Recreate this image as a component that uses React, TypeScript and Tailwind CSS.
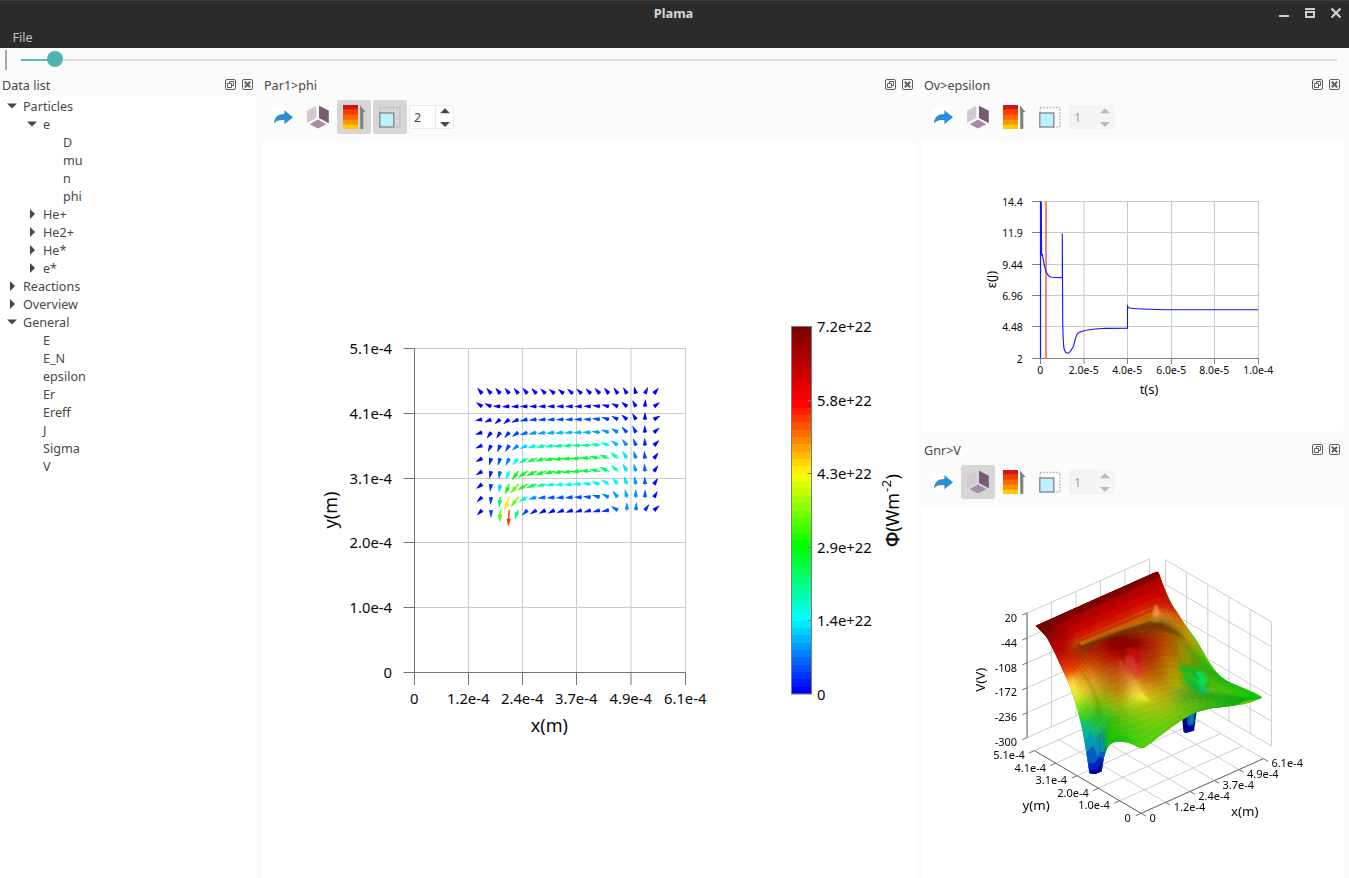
import React from "react";

type Pt = [number, number];
const INK = "#080808";
const FONT = "'Noto Sans', 'Open Sans', sans-serif";

const JET: [number, number[]][] = [
  [0, [0, 0, 255]],
  [0.2, [0, 255, 255]],
  [0.4, [0, 255, 0]],
  [0.6, [255, 255, 0]],
  [0.8, [255, 0, 0]],
  [1, [128, 0, 0]],
];

function jet(t: number) {
  for (let i = 1; i < JET.length; i++) {
    const [b, cb] = JET[i];
    const [a, ca] = JET[i - 1];
    if (t <= b) {
      const k = (t - a) / (b - a);
      return `rgb(${ca.map((c, j) => Math.round(c + (cb[j] - c) * k)).join(",")})`;
    }
  }
  return "rgb(128,0,0)";
}

/* ---------- icons ---------- */

function FloatIcon() {
  return (
    <svg width="11" height="11" viewBox="0 0 11 11" fill="none" stroke="#5e5e5e">
      <rect x="0.5" y="0.5" width="10" height="10" rx="1.5" />
      <path d="M4.5 4V2.5h4v4H7M2.5 4.5h4v4h-4z" />
    </svg>
  );
}

function CloseIcon() {
  return (
    <svg width="11" height="11" viewBox="0 0 11 11" fill="none" stroke="#5e5e5e">
      <rect x="0.5" y="0.5" width="10" height="10" rx="1.5" />
      <path d="M2.800 2.800l5.400 5.400M8.200 2.800l-5.400 5.400" strokeWidth="2" />
    </svg>
  );
}

function ShareIcon() {
  return (
    <svg width="24" height="24" viewBox="0 0 24 24">
      <rect x="2" y="3" width="17" height="17" fill="#fff" />
      <path d="M4 18.400C4.300 12.200 8 8.900 14.400 8.900V5.200L23 12.200l-8.600 7v-4C10 14.800 6.600 15.600 4 18.400z" fill="#2a8dd6" />
    </svg>
  );
}

function CubeIcon() {
  return (
    <svg width="24" height="24" viewBox="0 0 24 24">
      <path d="M1 5.800L10.300 0.800V13L1 18.200z" fill="#d5c8d5" />
      <path d="M13 0.800L22.800 5.800V18.200L13 13z" fill="#765b74" />
      <path d="M12 14.600L20.300 19.200L12 23.600L3.700 19.200z" fill="#a88ba6" />
    </svg>
  );
}

function ScaleIcon() {
  return (
    <svg width="24" height="24" viewBox="0 0 24 24">
      <rect x="1" y="0" width="15" height="24" fill="#ffcc00" />
      <rect x="1" y="0" width="15" height="19" fill="#ff9300" />
      <rect x="1" y="0" width="15" height="14" fill="#ff6600" />
      <rect x="1" y="0" width="15" height="9.300" fill="#f53d00" />
      <rect x="1" y="0" width="15" height="4.300" fill="#d4151a" />
      <path d="M1 4.500h15M1 9.500h15M1 14.500h15M1 19.300h15" stroke="#d93a10" strokeWidth="0.500" opacity="0.600" />
      <path d="M18 0.500L23.500 7H21.300V24H18.300z" fill="#808080" />
    </svg>
  );
}

function FrameIcon() {
  return (
    <svg width="24" height="24" viewBox="0 0 24 24" fill="none">
      <path d="M2 2.500H22M21.800 4V22.500" stroke="#b4b4b4" strokeWidth="1.500" strokeDasharray="1.600 1.600" />
      <path d="M2.200 3v5M15 22.200h7" stroke="#b4b4b4" strokeWidth="1.300" strokeDasharray="1.600 1.600" />
      <rect x="1.800" y="8" width="14" height="14" fill="#baf2ff" stroke="#8a8a8a" strokeWidth="1.400" />
    </svg>
  );
}

/* ---------- widgets ---------- */

function DockTitle({ title }: { title: string }) {
  return (
    <div className="flex h-[20px] shrink-0 items-start pr-[3px] pl-[2px]">
      <span className="flex-1 pt-[2px]">{title}</span>
      <div className="flex gap-[6px] pt-[4px]">
        <FloatIcon />
        <CloseIcon />
      </div>
    </div>
  );
}

function ToolButton({ on, children }: { on?: boolean; children: React.ReactNode }) {
  return (
    <button
      className={
        "flex h-[34px] w-[34px] items-center justify-center rounded-[2px] " + (on ? "bg-[#d6d6d6]" : "")
      }
    >
      {children}
    </button>
  );
}

function Spin({ value, disabled }: { value: number; disabled?: boolean }) {
  const c = disabled ? "#b9b9b9" : "#474747";
  return (
    <div
      className={
        "flex h-[24px] w-[45px] overflow-hidden rounded-[2px] border " +
        (disabled ? "border-[#f2f2f2] bg-[#f3f3f3] text-[#a3a3a3]" : "border-[#e9e9e9] bg-white text-[#474747]")
      }
    >
      <div className="flex flex-1 items-center pt-[2px] pl-1">{value}</div>
      <div
        className={
          "flex w-[18px] items-center justify-center border-l " +
          (disabled ? "border-[#f3f3f3] bg-[#f5f5f5]" : "border-[#e9e9e9]")
        }
      >
        <svg width="10" height="20" viewBox="0 0 10 20" fill={c}>
          <path d="M0 6.300L5 1.300L10 6.300z" />
          <path d="M0 15.100h10L5 20z" />
        </svg>
      </div>
    </div>
  );
}

function Toolbar({ on, value, disabled }: { on: string[]; value: number; disabled?: boolean }) {
  return (
    <div className="flex h-[47px] shrink-0 items-center gap-[2px] pb-[3px] pl-[3px]">
      <ToolButton><ShareIcon /></ToolButton>
      <ToolButton on={on.includes("cube")}><CubeIcon /></ToolButton>
      <ToolButton on={on.includes("scale")}><ScaleIcon /></ToolButton>
      <ToolButton on={on.includes("frame")}><FrameIcon /></ToolButton>
      <Spin value={value} disabled={disabled} />
    </div>
  );
}

/* ---------- tree ---------- */

type Node = { label: string; depth: number; state?: "open" | "closed" };
const TREE: Node[] = [
  { label: "Particles", depth: 0, state: "open" },
  { label: "e", depth: 1, state: "open" },
  { label: "D", depth: 2 },
  { label: "mu", depth: 2 },
  { label: "n", depth: 2 },
  { label: "phi", depth: 2 },
  { label: "He+", depth: 1, state: "closed" },
  { label: "He2+", depth: 1, state: "closed" },
  { label: "He*", depth: 1, state: "closed" },
  { label: "e*", depth: 1, state: "closed" },
  { label: "Reactions", depth: 0, state: "closed" },
  { label: "Overview", depth: 0, state: "closed" },
  { label: "General", depth: 0, state: "open" },
  ...["E", "E_N", "epsilon", "Er", "Ereff", "J", "Sigma", "V"].map((label) => ({ label, depth: 1 })),
];

const INDENT = ["pl-[7px]", "pl-[27px]", "pl-[47px]"];

function Tree() {
  return (
    <div className="mt-[2px] flex-1 bg-white">
      {TREE.map((n, i) => (
        <div key={i} className={"flex h-[18px] items-center " + INDENT[n.depth]}>
          <svg width="10" height="10" viewBox="0 0 10 10" fill="#474747">
            {n.state === "open" && <path d="M0 2.500h10L5 7.500z" />}
            {n.state === "closed" && <path d="M3 0L8 5L3 10z" />}
          </svg>
          <span className="pt-[2px] pl-[6px]">{n.label}</span>
        </div>
      ))}
    </div>
  );
}

/* ---------- vector field ---------- */

const ANGLES = [
  [130, 130, 130, 128, 128, 130, 133, 135, 140, 140, 138, 138, 135, 133, 130, 126, 122, 105, 65, 50],
  [145, 155, 178, 182, 183, 180, 180, 180, 180, 180, 180, 180, 178, 172, 165, 155, 140, 120, 86, 35],
  [190, 205, 220, 218, 205, 192, 187, 185, 184, 183, 183, 180, 178, 172, 162, 152, 138, 120, 90, 30],
  [198, 235, 240, 230, 215, 200, 193, 190, 187, 186, 184, 182, 178, 172, 160, 148, 132, 118, 92, 40],
  [205, 245, 248, 238, 218, 205, 197, 193, 190, 187, 184, 180, 178, 172, 160, 145, 128, 112, 93, 45],
  [210, 255, 252, 245, 230, 212, 203, 196, 192, 188, 184, 181, 177, 170, 158, 140, 122, 108, 95, 52],
  [212, 258, 260, 248, 235, 215, 205, 200, 195, 190, 186, 182, 176, 168, 155, 138, 118, 105, 95, 55],
  [218, 262, 262, 248, 230, 212, 200, 193, 188, 185, 182, 178, 172, 162, 148, 130, 110, 103, 92, 57],
  [222, 266, 265, 250, 232, 210, 195, 188, 186, 185, 183, 180, 174, 165, 152, 130, 104, 92, 88, 60],
  [225, 270, 268, 267, 248, 225, 212, 208, 205, 202, 200, 198, 196, 194, 190, 150, 90, 85, 55, 40],
];

const MAGS = [
  [0, 0, 0, 0, 0, 0, 0, 0, 0, 0, 0, 0, 0, 0, 0, 0, 0, 0, 0, 0],
  [0, 0, 0, 0, 0, 0.01, 0.01, 0.01, 0.01, 0.01, 0.01, 0.01, 0.01, 0.01, 0, 0, 0, 0, 0, 0],
  [0, 0, 0, 0.01, 0.03, 0.04, 0.05, 0.06, 0.06, 0.07, 0.07, 0.07, 0.07, 0.06, 0.04, 0.03, 0.01, 0, 0, 0],
  [0, 0.01, 0.02, 0.03, 0.05, 0.08, 0.12, 0.13, 0.14, 0.15, 0.15, 0.15, 0.14, 0.13, 0.12, 0.1, 0.06, 0.03, 0.02, 0],
  [0, 0.02, 0.03, 0.05, 0.11, 0.17, 0.23, 0.26, 0.27, 0.28, 0.28, 0.28, 0.27, 0.25, 0.2, 0.15, 0.11, 0.06, 0.03, 0],
  [0, 0.03, 0.06, 0.1, 0.2, 0.28, 0.33, 0.35, 0.36, 0.37, 0.37, 0.37, 0.36, 0.34, 0.31, 0.26, 0.18, 0.1, 0.05, 0],
  [0, 0.03, 0.09, 0.22, 0.37, 0.4, 0.38, 0.38, 0.37, 0.36, 0.36, 0.36, 0.35, 0.33, 0.3, 0.26, 0.18, 0.12, 0.08, 0.01],
  [0, 0.04, 0.17, 0.4, 0.47, 0.41, 0.34, 0.27, 0.23, 0.2, 0.2, 0.2, 0.19, 0.19, 0.2, 0.2, 0.18, 0.12, 0.07, 0.01],
  [0, 0.05, 0.33, 0.62, 0.48, 0.25, 0.12, 0.08, 0.07, 0.07, 0.07, 0.06, 0.07, 0.08, 0.1, 0.12, 0.13, 0.11, 0.07, 0.01],
  [0, 0.06, 0.46, 0.76, 0.3, 0.05, 0.02, 0.01, 0.01, 0.01, 0.01, 0.01, 0.02, 0.03, 0.04, 0.08, 0.12, 0.1, 0.04, 0.01],
];

function Arrows() {
  const out: React.ReactNode[] = [];
  ANGLES.forEach((row, r) =>
    row.forEach((a, c) => {
      const t = MAGS[r][c];
      const len = (20.5 + t * 23 + t * t * 16) / 3;
      const head = Math.min(len, 7.2);
      const shaft = len - head;
      out.push(
        <path
          key={r * 20 + c}
          transform={`translate(${(482 + c * 9.053).toFixed(2)},${(393.5 + r * 12.97).toFixed(2)}) rotate(${-a})`}
          d={`M-0.300 -0.700H${shaft}V-2.150L${len} -0.250V0.250L${shaft} 2.150V0.700H-0.300z`}
          fill={jet(t)}
        />,
      );
    }),
  );
  return <g>{out}</g>;
}

const MX = [414.5, 468.5, 522.5, 576.5, 631, 685.5];
const MY = [348.5, 413.5, 478.5, 542.5, 607.5, 672.5];
const MXL = ["0", "1.2e-4", "2.4e-4", "3.7e-4", "4.9e-4", "6.1e-4"];
const MYL = ["5.1e-4", "4.1e-4", "3.1e-4", "2.0e-4", "1.0e-4", "0"];
const BARS = Array.from({ length: 50 }, (_, i) => i);
const BAR_LABELS: [string, number][] = [
  ["7.2e+22", 332],
  ["5.8e+22", 405.500],
  ["4.3e+22", 479],
  ["2.9e+22", 552.500],
  ["1.4e+22", 626],
  ["0", 699.500],
];

function FieldPlot() {
  return (
    <svg className="min-h-0 flex-1 bg-white" width="654" viewBox="262 142 654 736" preserveAspectRatio="xMinYMin slice" fontFamily={FONT} fontSize="14.800" fill={INK}>
      <g stroke="#cbcbcb" strokeWidth="1">
        {MX.map((x) => <path key={x} d={`M${x} 348.500V672`} />)}
        {MY.map((y) => <path key={y} d={`M414 ${y}H686`} />)}
      </g>
      <g stroke="#737373" strokeWidth="1">
        <path d="M414.500 348.500V672.500H685.500" fill="none" />
        {MX.map((x) => <path key={x} d={`M${x} 672.500V685`} />)}
        {MY.map((y) => <path key={y} d={`M403.500 ${y}H414.500`} />)}
      </g>
      {MXL.map((t, i) => (
        <text key={t} x={MX[i] - 0.300} y="703.800" textAnchor="middle">{t}</text>
      ))}
      {MYL.map((t, i) => (
        <text key={t} x="392" y={MY[i] + 5.300} textAnchor="end" textLength={t === "0" ? undefined : 42.5}>{t}</text>
      ))}
      <text x="549.300" y="732" textAnchor="middle" fontSize="18">x(m)</text>
      <text transform="translate(337,510) rotate(-90)" textAnchor="middle" fontSize="18">y(m)</text>
      <Arrows />
      <g shapeRendering="crispEdges">
        {BARS.map((i) => (
          <rect key={i} x="792" y={327 + i * 7.34} width="19" height="7.800" fill={jet(1 - i / 49)} />
        ))}
      </g>
      <rect x="791.500" y="326.500" width="20" height="367.500" fill="none" stroke="#7c7c7c" />
      <path d="M807.500 400.500h4M807.500 473.500h4M807.500 547.500h4M807.500 620.500h4" stroke="#777" />
      {BAR_LABELS.map(([t, y]) => (
        <text key={t} x="817" y={y}>{t}</text>
      ))}
      <text transform="translate(899,547) rotate(-90)" fontSize="18">
        <tspan stroke={INK} strokeWidth="0.500">Φ</tspan>(Wm<tspan dx="1" dy="-8" fontSize="13">-</tspan><tspan dx="0.500" fontSize="13">2</tspan>
        <tspan dx="0.500" dy="8">)</tspan>
      </text>
    </svg>
  );
}

/* ---------- time trace ---------- */

const EX = [1040.500, 1084, 1127.500, 1171.500, 1214.500, 1258.500];
const EY = [201.500, 232.500, 264.500, 295.500, 326.500, 358.500];
const EXL = ["0", "2.0e-5", "4.0e-5", "6.0e-5", "8.0e-5", "1.0e-4"];
const EYL = ["14.4", "11.9", "9.44", "6.96", "4.48", "2"];

function TracePlot() {
  return (
    <svg className="shrink-0 bg-white" width="421" height="289" viewBox="922 142 421 289" fontFamily={FONT} fontSize="10.400" fill={INK}>
      <g stroke="#cbcbcb">
        {EX.map((x) => <path key={x} d={`M${x} 201V358`} />)}
        {EY.map((y) => <path key={y} d={`M1040 ${y}H1259`} />)}
      </g>
      <g stroke="#808080" fill="none">
        <path d="M1040.500 358.500H1258.500" />
        {EX.map((x) => <path key={x} d={`M${x} 358.500V364`} />)}
        {EY.map((y) => <path key={y} d={`M1032 ${y}H1040.500`} />)}
      </g>
      <path d="M1046 201.500V358" stroke="#ff0000" strokeOpacity="0.500" strokeWidth="2" />
      <g stroke="#1414ff" fill="none">
        <path d="M1040.500 358V201.500L1041.300 204L1041.600 255L1042.400 254.500C1043.600 262 1044.500 268 1046.300 272C1047.800 275.500 1049.500 277 1051.500 277.200L1062 277.600" strokeWidth="1.100" />
        <path d="M1040.500 358V201.500M1041 201.500V250" strokeWidth="1.100" />
        <path d="M1062.300 278V233.500L1062.700 320C1063 335 1063.300 345 1064 348.500C1065 352 1066 353.200 1067.500 353.200C1070 353 1072 349 1073.300 346.500C1075 342 1075.500 336 1077.500 333.500C1082 329.500 1095 329 1105 328.400L1127.500 328.200V306L1128.500 307.700C1133 308.800 1140 309 1150 309.300L1165 309.700H1258" strokeWidth="1.100" />
      </g>
      {EXL.map((t, i) => (
        <text key={t} x={EX[i] - 0.300} y="374.300" textAnchor="middle">{t}</text>
      ))}
      {EYL.map((t, i) => (
        <text key={t} x="1022.800" y={EY[i] + 4} textAnchor="end">{t}</text>
      ))}
      <text x="1149" y="394" textAnchor="middle" fontSize="13">t(s)</text>
      <text transform="translate(996,279.500) rotate(-90)" textAnchor="middle" fontSize="13">ε(J)</text>
    </svg>
  );
}

/* ---------- surface ---------- */

type Ctrl = [number, number, string];
const MESH: Ctrl[][] = [
  [[18, 196, "700000"], [70, 173, "760000"], [115, 152, "780000"], [160, 132, "7c0000"], [205, 112, "800000"], [250, 93, "800000"], [295, 73, "840000"], [340, 53, "880000"], [386, 34, "900000"]],
  [[40, 217, "7a0000"], [75, 195, "8c0000"], [118, 172, "960000"], [162, 152, "9c0000"], [206, 132, "a00000"], [250, 112, "a00000"], [296, 91, "a00000"], [340, 71, "a40000"], [392, 48, "ac0000"]],
  [[52, 232, "8e0000"], [85, 215, "9c0000"], [122, 200, "b00000"], [165, 180, "c00000"], [210, 160, "c40000"], [254, 141, "c40000"], [298, 121, "c40000"], [342, 101, "c40000"], [402, 75, "c00404"]],
  [[68, 262, "ac0000"], [100, 238, "b00000"], [132, 230, "bc0c00"], [170, 214, "cc1400"], [212, 196, "d41a00"], [256, 178, "d61c00"], [300, 159, "d82000"], [345, 138, "d82000"], [425, 130, "cc1808"]],
  [[82, 290, "c40c00"], [112, 264, "bc1000"], [152, 243, "cc4c00"], [180, 230, "c45400"], [215, 218, "c45800"], [256, 202, "c46000"], [305, 184, "c06800"], [375, 166, "d88028"], [450, 165, "d04c08"]],
  [[95, 320, "e02c00"], [125, 290, "c82400"], [158, 254, "8c3400"], [190, 240, "843000"], [222, 228, "803000"], [260, 213, "803000"], [310, 198, "804000"], [385, 189, "805010"], [480, 218, "c89c00"]],
  [[110, 352, "f86c18"], [140, 318, "dc4000"], [185, 272, "a82400"], [225, 252, "9c1000"], [262, 242, "900400"], [300, 240, "900800"], [350, 232, "a42000"], [415, 225, "a45000"], [508, 262, "94b400"]],
  [[125, 385, "ffe040"], [160, 338, "e87c10"], [205, 306, "c43c00"], [245, 290, "b41400"], [275, 290, "b01000"], [318, 275, "b41018"], [370, 265, "b02800"], [430, 260, "b06000"], [535, 310, "28c410"]],
  [[140, 430, "a0f020"], [180, 380, "e8b428"], [220, 350, "c07418"], [255, 330, "c44810"], [285, 322, "cc4820"], [325, 318, "d02a20"], [375, 300, "b04000"], [438, 300, "b07c00"], [575, 350, "08c010"]],
  [[152, 480, "20d820"], [198, 420, "98c018"], [235, 400, "b09c10"], [270, 385, "c08410"], [305, 362, "d88830"], [340, 352, "cc6418"], [390, 345, "b46c00"], [452, 345, "a4a000"], [625, 378, "08c018"]],
  [[160, 520, "10c888"], [205, 460, "38c020"], [242, 440, "80bc10"], [280, 430, "a8b410"], [325, 405, "e8dc30"], [360, 400, "d4b418"], [405, 385, "bc9810"], [465, 378, "94b010"], [698, 411, "00cc08"]],
  [[168, 565, "0a9ac8"], [210, 510, "18b860"], [245, 480, "38bc18"], [290, 470, "70c010"], [330, 450, "98c810"], [370, 440, "a8c410"], [420, 425, "a4b410"], [500, 405, "40a820"], [650, 420, "08b010"]],
  [[176, 610, "0848b8"], [215, 555, "0878b0"], [238, 525, "20c010"], [280, 515, "3cc410"], [325, 510, "58cc10"], [370, 490, "74cc10"], [430, 460, "84c410"], [510, 432, "54b410"], [610, 437, "10b410"]],
  [[182, 640, "000090"], [217, 633, "0020a0"], [235, 560, "08b838"], [262, 545, "10c010"], [335, 566, "48d010"], [385, 532, "58d010"], [440, 490, "64c810"], [500, 458, "50b810"], [560, 444, "18b410"]],
];

const hex = (s: string) => [0, 2, 4].map((i) => parseInt(s.slice(i, i + 2), 16));

function spline(a: number, b: number, c: number, d: number, t: number) {
  return 0.5 * (2 * b + (c - a) * t + (2 * a - 5 * b + 4 * c - d) * t * t + (3 * b - a - 3 * c + d) * t * t * t);
}

function buildSurface() {
  const grid = MESH.map((r) => r.map(([x, y, c]) => [x, y, ...hex(c)]));
  const rows = grid.length;
  const cols = grid[0].length;
  const n = 5;
  const along = (list: number[][], u: number) => {
    const i = Math.min(Math.floor(u), list.length - 2);
    const t = u - i;
    const g = (k: number) => list[Math.max(0, Math.min(list.length - 1, k))];
    return g(i).map((_, k) => spline(g(i - 1)[k], g(i)[k], g(i + 1)[k], g(i + 2)[k], t));
  };
  const pts: number[][][] = [];
  for (let v = 0; v <= (rows - 1) * n; v++) {
    const line: number[][] = [];
    for (let u = 0; u <= (cols - 1) * n; u++) {
      line.push(along(grid.map((r) => along(r, u / n)), v / n));
    }
    pts.push(line);
  }
  const cells: { d: string; c: string }[] = [];
  for (let v = 0; v < pts.length - 1; v++) {
    for (let u = 0; u < pts[0].length - 1; u++) {
      const q = [pts[v][u], pts[v][u + 1], pts[v + 1][u + 1], pts[v + 1][u]];
      const facet = v % 2 ? 2 : -2;
      const rgb = [2, 3, 4].map((k) =>
        Math.max(0, Math.min(255, Math.round(q.reduce((s, p) => s + p[k], 0) / 4 + facet))),
      );
      cells.push({
        d: q.map((p) => `${p[0].toFixed(1)},${p[1].toFixed(1)}`).join(" "),
        c: `rgb(${rgb.join(",")})`,
      });
    }
  }
  return cells;
}

const CELLS = buildSurface();
const OUTLINE =
  "M18 196L382 33L389 37C402 80 420 120 440 150C462 190 500 230 520 270C540 305 560 340 590 360C620 376 665 388 698 411C670 428 640 436 600 438L545 444C520 450 505 455 490 460C450 480 390 530 345 562L332 564C300 545 280 543 262 545C235 550 228 570 222 600L217 633L195 642L180 638C172 590 165 530 152 480C140 430 120 370 95 320C80 285 65 255 52 232Z";

function Surface() {
  return (
    <g>
      <path d="M458 470L502 450L494 511L468 519L462 513Z" fill="#00009c" />
      <path d="M472 462L498 452L494 491L482 497L474 492Z" fill="#00679c" />
      <path d="M480 462L492 456L490 484L482 488Z" fill="#0c7aa8" />
      <clipPath id="surface-outline">
        <path d={OUTLINE} />
      </clipPath>
      <filter id="soft3" x="-50%" y="-50%" width="200%" height="200%"><feGaussianBlur stdDeviation="3" /></filter>
      <filter id="soft7" x="-50%" y="-50%" width="200%" height="200%"><feGaussianBlur stdDeviation="9" /></filter>
      <g clipPath="url(#surface-outline)">
        <path d={OUTLINE} fill="#6cc010" />
        {CELLS.map((c, i) => (
          <polygon key={i} points={c.d} fill={c.c} stroke={c.c} strokeWidth="2" />
        ))}
        <g>
          <path d="M18 196L382 33L390 50L50 205z" fill="#780000" opacity="0.700" />
          <path d="M80 200L394 61L400 78L120 202z" fill="#b00000" opacity="0.500" />
          <path d="M110 208L398 80L392 108L130 222z" fill="#c80400" opacity="0.600" />
          <path d="M130 222L385 112L378 135L140 238z" fill="#d41400" opacity="0.600" />
          <path d="M142 239L375 142L368 156L150 246z" fill="#cc2800" opacity="0.800" />
          <path d="M149 246L368 157L372 174L158 254z" fill="#c86000" />
          <path d="M150 248L366 171L372 178L158 256z" fill="#b87000" opacity="0.700" />
        </g>
        <g filter="url(#soft3)">
          <path d="M374 142L380 130L392 158L384 170L370 168z" fill="#e89048" />
          <path d="M366 176L396 176L388 184L368 182z" fill="#b89010" />
          <path d="M158 256C220 224 300 196 390 188C425 194 445 212 466 236C430 218 400 208 370 207C290 212 220 239 178 265z" fill="#743400" opacity="0.700" />
          <path d="M440 240L462 250L490 300L466 310L450 290z" fill="#a0a808" opacity="0.400" />
          <path d="M446 310L486 318L516 326L545 372L520 396L470 372z" fill="#10bc20" opacity="0.800" />
          <path d="M505 332L518 332L536 358L524 382L508 372L490 350z" fill="#10e060" opacity="0.800" />
          <path d="M462 356L500 368L545 396L525 403L488 390z" fill="#10b444" opacity="0.800" />
          <path d="M508 376L530 384L545 396L514 392z" fill="#10c880" opacity="0.800" />
          <path d="M446 320C450 352 470 380 520 402C500 404 470 392 452 368z" fill="#588c00" opacity="0.400" />
          <path d="M490 330L504 346L510 360L494 352z" fill="#089830" opacity="0.800" />
        </g>
        <g filter="url(#soft7)">
          <ellipse cx="285" cy="252" rx="56" ry="15" fill="#880000" opacity="0.800" />
          <path d="M108 350L130 348L155 395L150 420L130 404z" fill="#fff050" opacity="0.600" />
          <path d="M300 345L322 360L344 405L330 420L312 395z" fill="#f4c850" opacity="0.400" />
        </g>
        <g filter="url(#soft3)">
          <path d="M290 264L314 260L336 298L326 306L314 292L300 290z" fill="#c00c08" opacity="0.800" />
          <path d="M300 290L310 286L330 350L320 352L306 330z" fill="#e84040" opacity="0.500" />
          <path d="M269 300L274 298L279 322L273 320zM291 288L296 288L298 312L291 308z" fill="#f06840" opacity="0.500" />
          <path d="M324 400L342 400L362 424L350 426L334 418z" fill="#fff030" opacity="0.600" />
          <path d="M142 318C180 345 202 385 213 440L210 500C202 440 190 384 142 318z" fill="#7c8400" opacity="0.350" />
        </g>
        <path d="M155 485L176 478L198 555L214 530L226 560L222 640H178z" fill="#08b0a0" opacity="0.500" />
        <path d="M166 545L184 515L198 560L210 530L214 600L220 640H178z" fill="#0092c4" opacity="0.700" />
        <path d="M172 575L192 556L205 590L212 575L228 575L218 640H178z" fill="#0058c0" opacity="0.900" />
        <path d="M178 610L196 608L212 588L222 596L218 640H180z" fill="#0022c0" />
        <path d="M180 630L204 628L214 606L216 634L195 643L181 640z" fill="#00009c" />
        <path d="M209 520L213 520L213 590L210 590z" fill="#0a70a0" opacity="0.700" />
      </g>
    </g>
  );
}

const LERP = [0, 0.2, 0.4, 0.6, 0.8, 1];
const mix = (a: Pt, b: Pt, t: number): Pt => [a[0] + (b[0] - a[0]) * t, a[1] + (b[1] - a[1]) * t];

function Wall({ a, b, c, d }: { a: Pt; b: Pt; c: Pt; d: Pt }) {
  return (
    <g stroke="#cdcdcd" strokeWidth="3" fill="none">
      {LERP.map((t) => (
        <React.Fragment key={t}>
          <path d={`M${mix(a, b, t)}L${mix(d, c, t)}`} />
          <path d={`M${mix(a, d, t)}L${mix(b, c, t)}`} />
        </React.Fragment>
      ))}
    </g>
  );
}

const ZL = ["20", "-44", "-108", "-172", "-236", "-300"];

function SurfacePlot() {
  const left: Pt = [225, 631];
  const front: Pt = [545, 819];
  const right: Pt = [912, 655];
  const back: Pt = [592, 467];
  return (
    <svg className="mt-px min-h-0 flex-1 bg-white" width="421" viewBox="922.600 507.700 421 370" preserveAspectRatio="xMinYMin slice" fontFamily={FONT} fill={INK}>
      <g transform="translate(960,540) scale(0.33333)">
        <Wall a={[203, 218]} b={[570, 56]} c={[570, 430]} d={[203, 592]} />
        <Wall a={[618, 58]} b={[936, 245]} c={[936, 617]} d={[618, 430]} />
        <Wall a={left} b={back} c={right} d={front} />
        <g stroke="#6a6a6a" strokeWidth="3" fill="none">
          <path d={`M203 218V592M${left}L${front}L${right}`} />
          {LERP.map((t) => {
            const p = mix(left, front, t);
            const q = mix(front, right, t);
            const z = 218 + t * 374;
            return (
              <path key={t} d={`M203 ${z}l-14 6M${p}l-16 7M${q}l14 8`} />
            );
          })}
        </g>
        <g transform="translate(210,60)">
          <Surface />
        </g>
        <g fontSize="33">
          {ZL.map((t, i) => (
            <text key={t} x="173" y={246 + i * 74} textAnchor="end">{t}</text>
          ))}
          {["5.1e-4", "4.1e-4", "3.1e-4", "2.0e-4", "1.0e-4", "0"].map((t, i) => (
            <text key={t} x={[196, 260, 323, 388, 451, 514][i]} y={656 + i * 37.800} textAnchor="end">{t}</text>
          ))}
          {["0", "1.2e-4", "2.4e-4", "3.7e-4", "4.9e-4", "6.1e-4"].map((t, i) => (
            <text key={t} x={570 + i * 73.200} y={846 - i * 33.300}>{t}</text>
          ))}
        </g>
        <g fontSize="40">
          <text x="230" y="810" textAnchor="middle">y(m)</text>
          <text x="856" y="828" textAnchor="middle">x(m)</text>
          <text transform="translate(77,418) rotate(-90)" textAnchor="middle">V(V)</text>
        </g>
      </g>
    </svg>
  );
}

/* ---------- window ---------- */

export default function App() {
  return (
    <div className="flex h-[878px] w-[1349px] flex-col overflow-hidden bg-[#fbfbfb] font-['Noto_Sans','Open_Sans',sans-serif] text-[12.600px] leading-[18px] text-[#474747]">
      <header className="flex h-[48px] shrink-0 flex-col border-t border-[#3c3c3c] bg-[#2b2b2b]">
        <div className="grid h-[25px] grid-cols-[1fr_auto_1fr] items-start">
          <span />
          <span className="pt-[3px] pr-[2px] text-[12.800px] font-bold text-[#d6d6d6]">Plama</span>
          <svg className="justify-self-end" width="71" height="24" viewBox="1278 1 71 24" fill="none" stroke="#cfcfcf">
            <path d="M1279 16h10" strokeWidth="2" />
            <path d="M1305 9h10" strokeWidth="2" />
            <rect x="1306" y="12" width="8" height="5" strokeWidth="2" />
            <path d="M1331.500 8.500l9 9M1340.500 8.500l-9 9" strokeWidth="2.200" />
          </svg>
        </div>
        <div className="flex flex-1 items-center pt-[2px] pl-[12.500px] text-[#c4c4c4]">File</div>
      </header>

      <div className="flex h-[27px] shrink-0 items-start">
        <svg width="1349" height="24" viewBox="0 48 1349 24">
          <path d="M6 50V70" stroke="#a6a6a6" strokeWidth="2" />
          <path d="M55 60H1337" stroke="#dcdcdc" strokeWidth="2" />
          <path d="M21 60H55" stroke="#5cbdb4" strokeWidth="2" />
          <circle cx="55" cy="59" r="8" fill="#4db6ac" />
        </svg>
      </div>

      <main className="flex min-h-0 flex-1 gap-[6px]">
        <aside className="flex w-[256px] shrink-0 flex-col">
          <DockTitle title="Data list" />
          <Tree />
        </aside>
        <section className="flex w-[654px] shrink-0 flex-col">
          <DockTitle title="Par1>phi" />
          <Toolbar on={["scale", "frame"]} value={2} />
          <FieldPlot />
        </section>
        <div className="flex w-[421px] shrink-0 flex-col">
          <section className="flex h-[365px] shrink-0 flex-col">
            <DockTitle title="Ov>epsilon" />
            <Toolbar on={[]} value={1} disabled />
            <TracePlot />
          </section>
          <section className="flex min-h-0 flex-1 flex-col">
            <DockTitle title="Gnr>V" />
            <Toolbar on={["cube"]} value={1} disabled />
            <SurfacePlot />
          </section>
        </div>
      </main>
    </div>
  );
}
